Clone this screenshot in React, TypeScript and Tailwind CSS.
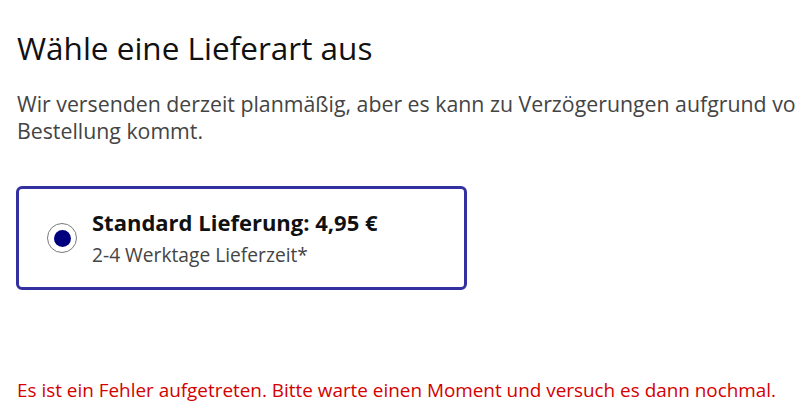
export default function App() {
  return (
    <div
      className="w-[795px] h-[415px] overflow-hidden bg-white"
      style={{ fontFamily: '"Open Sans", "Noto Sans", sans-serif' }}
    >
      <div className="pl-[17px] pt-[28px]">
        <h1 className="text-[31.5px] leading-[40px] text-[#111111]">Wähle eine Lieferart aus</h1>
        <p className="mt-[22px] whitespace-nowrap text-[21.3px] leading-[27px] text-[#444444]">
          Wir versenden derzeit planmäßig, aber es kann zu Verzögerungen aufgrund von hohem Bestellaufkommen bei deiner
          <br />
          Bestellung kommt.
        </p>
      </div>

      <div className="ml-[16px] mt-[42px] flex h-[104px] w-[451px] items-center rounded-[6px] border-[3px] border-[#3330a0] pl-[28px]">
        <div className="flex h-[30px] w-[30px] shrink-0 items-center justify-center rounded-full border border-[#7a7a7a] bg-white">
          <div className="h-[17px] w-[17px] rounded-full bg-[#00007f]" />
        </div>
        <div className="ml-[15px]">
          <div className="text-[22px] font-bold leading-[28px] text-[#111111]">Standard Lieferung: 4,95 €</div>
          <div className="mt-[6px] text-[19.2px] leading-[26px] text-[#444444]">2-4 Werktage Lieferzeit*</div>
        </div>
      </div>

      <p className="mt-[88px] pl-[17px] whitespace-nowrap text-[18.9px] leading-[24px] text-[#d40000]">
        Es ist ein Fehler aufgetreten. Bitte warte einen Moment und versuch es dann nochmal.
      </p>
    </div>
  );
}
